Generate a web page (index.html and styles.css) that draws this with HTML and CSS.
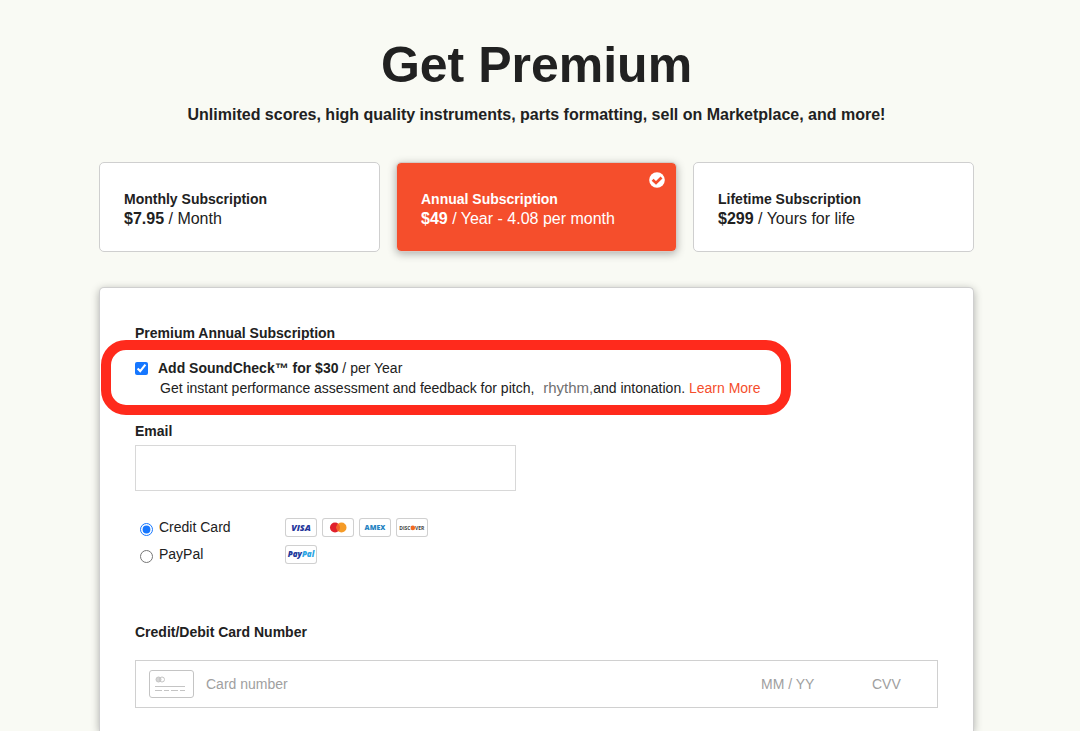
FILE: index.html
```html
<!DOCTYPE html>
<html lang="en">
<head>
<meta charset="utf-8">
<meta name="viewport" content="width=device-width, initial-scale=1">
<title>Get Premium</title>
<link rel="stylesheet" href="styles.css">
</head>
<body>
<main class="page">
  <header class="intro">
    <h1 class="title">Get Premium</h1>
    <p class="tagline">Unlimited scores, high quality instruments, parts formatting, sell on Marketplace, and more!</p>
  </header>

  <section class="plans" aria-label="Plans">
    <button class="plan" type="button">
      <span class="plan-name">Monthly Subscription</span>
      <span class="plan-price"><b>$7.95</b> / Month</span>
    </button>
    <button class="plan plan-active" type="button" aria-pressed="true">
      <span class="plan-name">Annual Subscription</span>
      <span class="plan-price"><b>$49</b> / Year - 4.08 per month</span>
      <svg class="plan-check" width="16" height="16" viewBox="0 0 16 16" aria-hidden="true">
        <circle cx="8" cy="8" r="7.800" fill="#fff"/>
        <path d="M3.600 7.700 7 10.900 12.500 5.500" fill="none" stroke="#f54e2c" stroke-width="2.800"/>
      </svg>
    </button>
    <button class="plan" type="button">
      <span class="plan-name">Lifetime Subscription</span>
      <span class="plan-price"><b>$299</b> / Yours for life</span>
    </button>
  </section>

  <form class="panel">
    <h2 class="label">Premium Annual Subscription</h2>

    <div class="addon">
      <input class="tick" type="checkbox" id="soundcheck" checked>
      <div>
        <label class="addon-name" for="soundcheck"><b>Add SoundCheck™ for $30</b> / per Year</label>
        <p class="addon-text">Get instant performance assessment and feedback for pitch, <span class="patched">rhythm,</span>and intonation. <a class="link" href="#">Learn More</a></p>
      </div>
      <div class="highlight"></div>
    </div>

    <label class="label" for="email">Email</label>
    <input class="email" type="email" id="email">

    <div class="methods">
      <div class="method">
        <input class="radio" type="radio" name="method" id="card" checked>
        <label class="method-name" for="card">Credit Card</label>
        <div class="brands">
          <svg class="brand" viewBox="0 0 32 19" role="img" aria-label="Visa">
            <text class="brand-text visa" x="16" y="13" text-anchor="middle">VISA</text>
          </svg>
          <svg class="brand" viewBox="0 0 32 19" role="img" aria-label="Mastercard">
            <circle cx="13" cy="9.5" r="5" fill="#e0202c"/>
            <circle cx="19.500" cy="9.5" r="5" fill="#f59b27"/>
            <path d="M16.250 5.700a5 5 0 0 1 0 7.600a5 5 0 0 1 0-7.600" fill="#f2622a"/>
          </svg>
          <svg class="brand" viewBox="0 0 32 19" role="img" aria-label="American Express">
            <text class="brand-text amex" x="16" y="12" text-anchor="middle">AMEX</text>
          </svg>
          <svg class="brand" viewBox="0 0 32 19" role="img" aria-label="Discover">
            <text class="brand-text discover" x="14.500" y="12" text-anchor="end">DISC</text>
            <circle cx="16.800" cy="9.900" r="2.300" fill="#f26a21"/>
            <text class="brand-text discover" x="19" y="12">VER</text>
          </svg>
        </div>
      </div>
      <div class="method">
        <input class="radio" type="radio" name="method" id="paypal">
        <label class="method-name" for="paypal">PayPal</label>
        <div class="brands">
          <svg class="brand" viewBox="0 0 32 19" role="img" aria-label="PayPal">
            <text class="brand-text paypal" x="16" y="12" text-anchor="middle">Pay<tspan class="pal">Pal</tspan></text>
          </svg>
        </div>
      </div>
    </div>

    <label class="label" for="number">Credit/Debit Card Number</label>
    <div class="card-field">
      <svg class="card-icon" width="45" height="28" viewBox="0 0 45 28" fill="none" stroke="#c4c4c4" aria-hidden="true">
        <rect x=".5" y=".5" width="44" height="27" rx="2.500"/>
        <circle cx="9.500" cy="9.500" r="2.500" fill="#d4d4d4"/>
        <circle cx="13" cy="9.500" r="2.500"/>
        <path d="M6 16.500h30M6 20.500h7M15 20.500h5M22 20.500h7M31 20.500h5"/>
      </svg>
      <input class="field number" id="number" type="text" placeholder="Card number">
      <input class="field expiry" type="text" placeholder="MM / YY" aria-label="Expiry date">
      <input class="field cvv" type="text" placeholder="CVV" aria-label="CVV">
    </div>
  </form>
</main>
</body>
</html>
```
FILE: styles.css
```css
* {
  box-sizing: border-box;
}

body {
  margin: 0;
  padding-right: 7px;
  background: #f9faf4;
  color: #212121;
  font: 14px/20px "Liberation Sans", Arial, sans-serif;
}

.page {
  display: flex;
  flex-direction: column;
  max-width: 875px;
  min-height: 100vh;
  margin: 0 auto;
  padding-top: 35px;
}

.intro {
  text-align: center;
}

.title {
  margin: 0;
  font-size: 50px;
  line-height: 60px;
}

.tagline {
  margin: 10px 0 0;
  font-size: 16px;
  font-weight: bold;
}

.plans {
  display: grid;
  grid-template-columns: repeat(3, 1fr);
  gap: 16px;
  margin: 37px 0 35px;
}

.plan {
  position: relative;
  display: flex;
  flex-direction: column;
  justify-content: center;
  min-height: 90px;
  padding: 26px 24px 22px;
  border: 1px solid #cfcfcf;
  border-radius: 5px;
  background: #fff;
  color: inherit;
  font: inherit;
  text-align: left;
}

.plan-active {
  border-color: #d5cbc6;
  background: #f54e2c;
  background-clip: padding-box;
  box-shadow: 0 2px 8px rgba(0, 0, 0, 0.3);
  color: #fff;
}

.plan-name {
  font-weight: bold;
}

.plan-price {
  font-size: 16px;
}

.plan-check {
  position: absolute;
  top: 9px;
  right: 11px;
}

.panel {
  flex: 1;
  padding: 35px 35px 20px;
  border: 1px solid #cfcfcf;
  border-bottom: 0;
  border-radius: 5px 5px 0 0;
  background: #fff;
  box-shadow: 0 2px 9px rgba(0, 0, 0, 0.3);
}

.label {
  display: block;
  margin: 0;
  font-size: 14px;
  font-weight: bold;
}

.addon {
  position: relative;
  display: flex;
  gap: 10px;
  margin: 15px 0 23px;
}

.tick {
  width: 13px;
  height: 13px;
  margin: 4px 0 0;
  accent-color: #1677ff;
}

.addon-name {
  display: block;
}

.addon-text {
  margin: 0 0 0 2px;
}

.patched {
  margin-left: 5px;
  color: #707070;
  font-size: 15px;
}

.link {
  color: #f54e2c;
  text-decoration: none;
}

.highlight {
  position: absolute;
  top: -18px;
  left: -34px;
  width: 690px;
  height: 75px;
  border: 10px solid #ff2a1c;
  border-radius: 25px;
  pointer-events: none;
}

.email {
  display: block;
  width: 100%;
  max-width: 381px;
  height: 46px;
  margin-top: 4px;
  padding: 0 12px;
  border: 1px solid #d8d8d8;
  background: #fff;
  font: inherit;
}

.methods {
  display: grid;
  gap: 7px;
  margin: 26px 0 58px;
}

.method {
  display: flex;
  align-items: flex-start;
  padding-left: 5px;
}

.radio {
  width: 13px;
  height: 13px;
  margin: 6px 6px 0 0;
  accent-color: #1677ff;
}

.method-name {
  width: 126px;
}

.brands {
  display: flex;
  gap: 5px;
  padding-top: 1px;
}

.brand {
  width: 32px;
  height: 19px;
  border-radius: 3px;
  box-shadow: inset 0 0 0 1px #d0d0d0;
}

.brand-text {
  font-family: "Open Sans", sans-serif;
  font-weight: 800;
}

.visa {
  fill: #26379b;
  font-size: 9px;
  font-style: italic;
}

.amex {
  fill: #2583c2;
  font-size: 7px;
}

.discover {
  fill: #444;
  font-size: 5px;
  font-weight: 700;
}

.paypal {
  fill: #20389b;
  font-size: 8px;
  font-style: italic;
}

.pal {
  fill: #2ba4e3;
}

.card-field {
  display: flex;
  align-items: center;
  height: 48px;
  margin-top: 18px;
  padding: 0 13px;
  border: 1px solid #d0d0d0;
}

.card-icon {
  flex: none;
  margin-right: 12px;
}

.field {
  min-width: 0;
  height: 40px;
  padding: 0;
  border: 0;
  background: none;
  color: inherit;
  font: inherit;
}

.field::placeholder {
  color: #a0a0a0;
  opacity: 1;
}

.number {
  flex: 1;
}

.expiry {
  width: 111px;
}

.cvv {
  width: 52px;
}
```
